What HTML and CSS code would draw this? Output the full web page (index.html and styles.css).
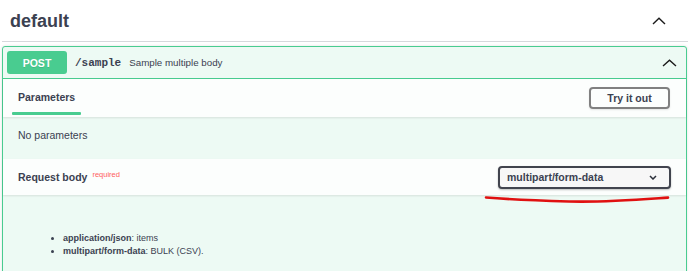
FILE: index.html
```html
<!DOCTYPE html>
<html>
<head>
<meta charset="utf-8">
<link rel="stylesheet" href="styles.css">
</head>
<body>
<div class="page">
  <div class="tag">
    <h3 class="tag-title">default</h3>
    <svg class="tag-chevron" width="14" height="8" viewBox="0 0 14 8"><polyline points="1,7 7,1.2 13,7" fill="none" stroke="#1b1b1b" stroke-width="1.4"/></svg>
  </div>
  <div class="opblock">
    <div class="summary">
      <span class="method">POST</span>
      <span class="path">/sample</span>
      <span class="desc">Sample multiple body</span>
      <svg class="op-chevron" width="15" height="8" viewBox="0 0 15 8"><polyline points="1,7 7.5,1.2 14,7" fill="none" stroke="#1b1b1b" stroke-width="1.4"/></svg>
    </div>
    <div class="section-header">
      <div class="tab"><span class="tab-label">Parameters</span><span class="tab-line"></span></div>
      <button class="try-btn">Try it out</button>
    </div>
    <div class="no-params">No parameters</div>
    <div class="section-header body-header">
      <div class="body-title"><span class="body-label">Request body</span><span class="required">required</span></div>
      <div class="select">
        <span>multipart/form-data</span>
        <svg width="8" height="5" viewBox="0 0 8 5"><polyline points="1,1 4,4 7,1" fill="none" stroke="#2b2f3a" stroke-width="1.5"/></svg>
      </div>
    </div>
    <div class="body-desc">
      <ul class="desc-list">
        <li><b>application/json</b>: items</li>
        <li><b>multipart/form-data</b>: BULK (CSV).</li>
      </ul>
    </div>
  </div>
  <svg class="annotation" width="190" height="12" viewBox="0 0 190 12"><path d="M2,3.5 C25,5.5 50,6.5 85,7.5 C120,8.5 150,6 184,3.6" fill="none" stroke="#e01010" stroke-width="2.6" stroke-linecap="round"/></svg>
</div>
</body>
</html>
```
FILE: styles.css
```css
* { box-sizing: border-box; }
html, body { margin: 0; padding: 0; background: #fff; }
body {
  font-family: "Liberation Sans", Arial, sans-serif;
  color: #3b4151;
}
.page {
  position: relative;
  padding: 0 2px;
  width: 690px;
  height: 271px;
  overflow: hidden;
}
.tag {
  display: flex;
  align-items: center;
  justify-content: space-between;
  padding: 9px 22px 8px 8px;
  border-bottom: 1px solid #d6d8dc;
}
.tag-title {
  margin: 0;
  font-size: 18px;
  line-height: 24px;
  font-weight: bold;
  color: #3b4151;
}
.tag-chevron { display: block; margin-top: -1px; }
.opblock {
  margin-top: 4px;
  margin-right: 1px;
  border: 1px solid #49cc90;
  border-radius: 3px;
  background: #edfaf4;
  box-shadow: 0 0 3px rgba(0,0,0,.12);
  height: 260px;
}
.summary {
  display: flex;
  align-items: center;
  height: 32px;
  padding: 0 9px 0 4px;
  border-bottom: 1px solid #49cc90;
}
.method {
  width: 60px;
  height: 23px;
  border-radius: 3px;
  background: #49cc90;
  color: #fff;
  font-weight: bold;
  font-size: 10.5px;
  display: flex;
  align-items: center;
  justify-content: center;
  text-shadow: 0 1px 0 rgba(0,0,0,.1);
}
.path {
  margin-left: 8px;
  font-family: "Liberation Mono", "Courier New", monospace;
  font-weight: bold;
  font-size: 11px;
  color: #3b4151;
}
.desc {
  margin-left: 8px;
  font-size: 9.75px;
  color: #3b4151;
  flex: 1;
}
.op-chevron { display: block; }
.section-header {
  display: flex;
  align-items: center;
  justify-content: space-between;
  height: 38px;
  padding: 0 16px 0 9px;
  background: rgba(255,255,255,.8);
  box-shadow: 0 1px 2px rgba(0,0,0,.1);
  position: relative;
}
.tab {
  align-self: stretch;
  display: flex;
  flex-direction: column;
  justify-content: flex-end;
  padding: 0 0 2px;
}
.tab-label {
  display: block;
  padding: 0 6px;
  font-size: 10.5px;
  line-height: 13px;
  font-weight: bold;
  margin-bottom: 8px;
}
.tab-line {
  display: block;
  height: 3px;
  background: #49cc90;
  border-radius: 1px;
}
.try-btn {
  width: 81px;
  height: 22px;
  border: 2px solid #808080;
  border-radius: 4px;
  background: transparent;
  font-family: "Liberation Sans", Arial, sans-serif;
  font-weight: bold;
  font-size: 10.5px;
  color: #3b4151;
  padding: 0;
  box-shadow: 0 1px 2px rgba(0,0,0,.1);
}
.no-params {
  padding: 12px 15px 17px;
  font-size: 10.5px;
  line-height: 13px;
}
.body-header {
  height: 36px;
  padding: 0 15px 0 15px;
}
.body-title { display: flex; align-items: flex-start; }
.body-label {
  font-size: 10.5px;
  line-height: 13px;
  font-weight: bold;
}
.required {
  font-size: 7.5px;
  line-height: 8px;
  color: #ff6060;
  margin-left: 5px;
  margin-top: 0;
}
.select {
  width: 173px;
  height: 23px;
  border: 2px solid #41444e;
  border-radius: 4px;
  background: #f7f7f7;
  display: flex;
  align-items: center;
  justify-content: space-between;
  padding: 0 12px 0 7px;
  font-weight: bold;
  font-size: 10.5px;
  box-shadow: 0 1px 2px rgba(0,0,0,.25);
}
.select svg { display: block; }
.body-desc { padding: 37px 0 0; }
.desc-list {
  margin: 0;
  padding-left: 60px;
  font-size: 9px;
  line-height: 13px;
}
.annotation {
  position: absolute;
  left: 484px;
  top: 194px;
}
```
